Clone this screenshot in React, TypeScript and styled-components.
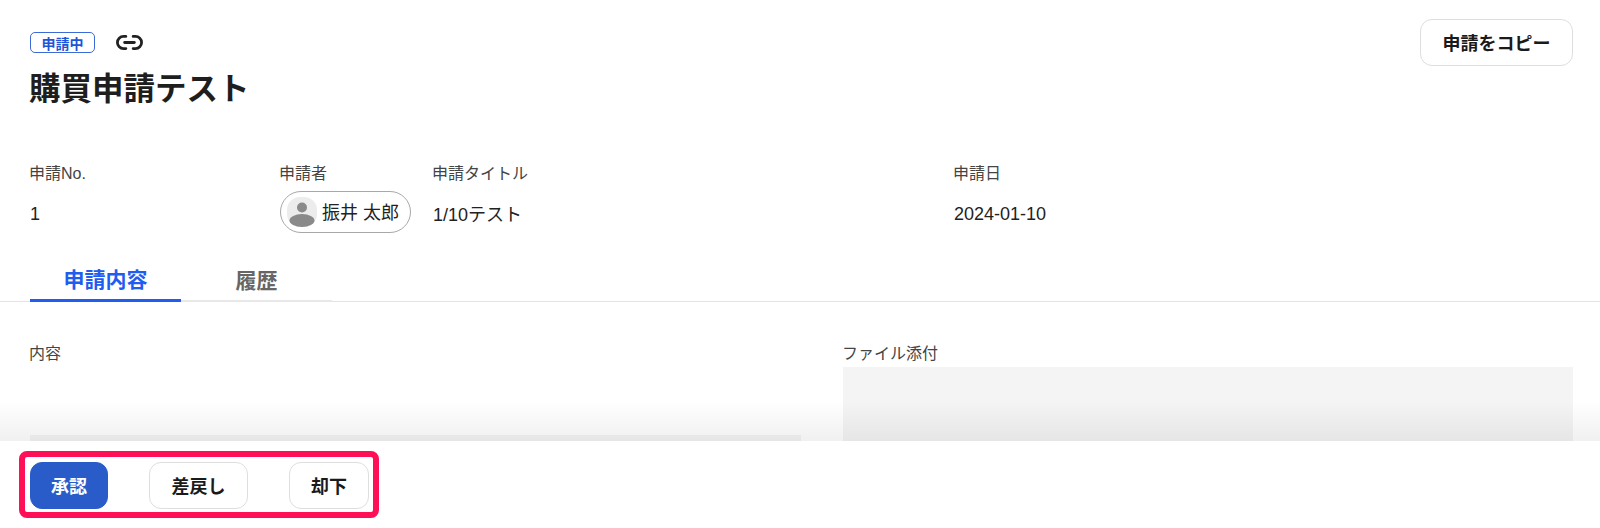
import React from "react";
import styled, { createGlobalStyle } from "styled-components";
import { Link2 } from "lucide-react";

const Global = createGlobalStyle`
  html, body { margin: 0; padding: 0; background: #fff; }
  body { font-family: "Liberation Sans", "Noto Sans CJK JP", sans-serif; color: #222; }
`;

const Page = styled.div`
  position: relative;
  width: 1600px;
  height: 528px;
  overflow: hidden;
  background: #fff;
`;

const Header = styled.header`
  display: flex;
  justify-content: space-between;
  align-items: flex-start;
  padding: 19px 27px 0 30px;
`;

const TitleBlock = styled.div`
  display: flex;
  flex-direction: column;
  padding-top: 13px;
`;

const StatusRow = styled.div`
  display: flex;
  align-items: center;
  gap: 20px;
  height: 21px;
`;

const Badge = styled.span`
  display: flex;
  align-items: center;
  justify-content: center;
  box-sizing: border-box;
  width: 65px;
  height: 21px;
  border: 1px solid #3c6ad6;
  border-radius: 5px;
  color: #1d55d8;
  font-size: 14px;
  font-weight: 700;
`;

const LinkIcon = styled(Link2)`
  display: block;
  color: #222;
`;

const Title = styled.h1`
  margin: 16px 0 0 -1px;
  font-size: 31.5px;
  line-height: 40px;
  font-weight: 700;
  color: #1e1e1e;
`;

const Button = styled.button<{ $primary?: boolean; $w: number }>`
  box-sizing: border-box;
  width: ${(p) => p.$w}px;
  height: 47px;
  border-radius: 12px;
  border: 1px solid ${(p) => (p.$primary ? "#2a5cc9" : "#dedede")};
  background: ${(p) => (p.$primary ? "#2a5cc9" : "#fff")};
  color: ${(p) => (p.$primary ? "#fff" : "#1a1a1a")};
  font-family: inherit;
  font-size: 18px;
  font-weight: 700;
  padding: 0 0 2px;
`;

const MetaGrid = styled.div`
  display: grid;
  grid-template-columns: 250px 153px 521px 1fr;
  padding: 0 30px;
  margin-top: 54px;
`;

const MetaCell = styled.div`
  display: flex;
  flex-direction: column;
`;

const Label = styled.div`
  margin-left: -1px;
  font-size: 16px;
  line-height: 22px;
  color: #444;
`;

const Value = styled.div<{ $shift?: number }>`
  display: flex;
  align-items: center;
  box-sizing: border-box;
  height: 42px;
  margin-top: 6px;
  padding-top: ${(p) => p.$shift ?? 0}px;
  font-size: 18px;
  color: #222;
`;

const Chip = styled.div`
  display: flex;
  align-items: center;
  gap: 6px;
  box-sizing: border-box;
  width: 131px;
  height: 42px;
  padding-left: 6px;
  border: 1px solid #a8a8a8;
  border-radius: 21px;
  font-size: 18px;
  white-space: nowrap;
`;

const ChipName = styled.span`
  margin: 0 0 3px -1px;
`;

const Avatar = styled.svg`
  display: block;
  flex: none;
`;

const TabBar = styled.div`
  display: flex;
  margin-top: 24px;
  padding-left: 30px;
  border-bottom: 1px solid #e4e4e4;
`;

const Tab = styled.div<{ $active?: boolean }>`
  box-sizing: border-box;
  width: 151px;
  height: 45px;
  display: flex;
  align-items: center;
  justify-content: center;
  margin-bottom: -1px;
  font-size: 21px;
  font-weight: 700;
  color: ${(p) => (p.$active ? "#1f5cf0" : "#666")};
  border-bottom: ${(p) => (p.$active ? "3px solid #1f5cf0" : "2px solid #e8e8e8")};
`;

const Content = styled.div`
  display: grid;
  grid-template-columns: 771px 730px;
  column-gap: 42px;
  padding: 41px 30px 0;
`;

const ContentCol = styled.div`
  display: flex;
  flex-direction: column;
`;

const FieldBox = styled.div<{ $gap: number }>`
  height: 200px;
  margin-top: ${(p) => p.$gap}px;
  background: #f5f4f4;
`;

const Fade = styled.div`
  position: absolute;
  left: 0;
  right: 0;
  bottom: 87px;
  height: 40px;
  background: linear-gradient(to bottom, rgba(0, 0, 0, 0), rgba(0, 0, 0, 0.06));
  pointer-events: none;
`;

const Footer = styled.footer`
  position: absolute;
  left: 0;
  right: 0;
  bottom: 0;
  height: 87px;
  box-sizing: border-box;
  padding: 10px 0 0 19px;
  background: #fff;
`;

const ActionGroup = styled.div`
  display: inline-flex;
  gap: 41px;
  box-sizing: border-box;
  width: 360px;
  height: 67px;
  padding: 5px 4px 3px 5px;
  border: 6px solid #ff0f55;
  border-radius: 8px;
`;

export default function App() {
  return (
    <Page>
      <Global />
      <Header>
        <TitleBlock>
          <StatusRow>
            <Badge>申請中</Badge>
            <LinkIcon size={29} strokeWidth={2.3} />
          </StatusRow>
          <Title>購買申請テスト</Title>
        </TitleBlock>
        <Button $w={153}>申請をコピー</Button>
      </Header>
      <MetaGrid>
        <MetaCell>
          <Label>申請No.</Label>
          <Value $shift={5}>1</Value>
        </MetaCell>
        <MetaCell>
          <Label>申請者</Label>
          <Value>
            <Chip>
              <Avatar width="30" height="30" viewBox="0 0 30 30">
                <rect width="30" height="30" rx="13" fill="#ececec" />
                <circle cx="15" cy="10.5" r="5" fill="#8a8a8a" />
                <ellipse cx="15" cy="23.5" rx="12.5" ry="6.5" fill="#8a8a8a" />
              </Avatar>
              <ChipName>振井 太郎</ChipName>
            </Chip>
          </Value>
        </MetaCell>
        <MetaCell>
          <Label>申請タイトル</Label>
          <Value $shift={2}>1/10テスト</Value>
        </MetaCell>
        <MetaCell>
          <Label>申請日</Label>
          <Value $shift={5}>2024-01-10</Value>
        </MetaCell>
      </MetaGrid>
      <TabBar>
        <Tab $active>申請内容</Tab>
        <Tab>履歴</Tab>
      </TabBar>
      <Content>
        <ContentCol>
          <Label>内容</Label>
          <FieldBox $gap={70} />
        </ContentCol>
        <ContentCol>
          <Label>ファイル添付</Label>
          <FieldBox $gap={2} />
        </ContentCol>
      </Content>
      <Fade />
      <Footer>
        <ActionGroup>
          <Button $primary $w={78}>承認</Button>
          <Button $w={99}>差戻し</Button>
          <Button $w={80}>却下</Button>
        </ActionGroup>
      </Footer>
    </Page>
  );
}
